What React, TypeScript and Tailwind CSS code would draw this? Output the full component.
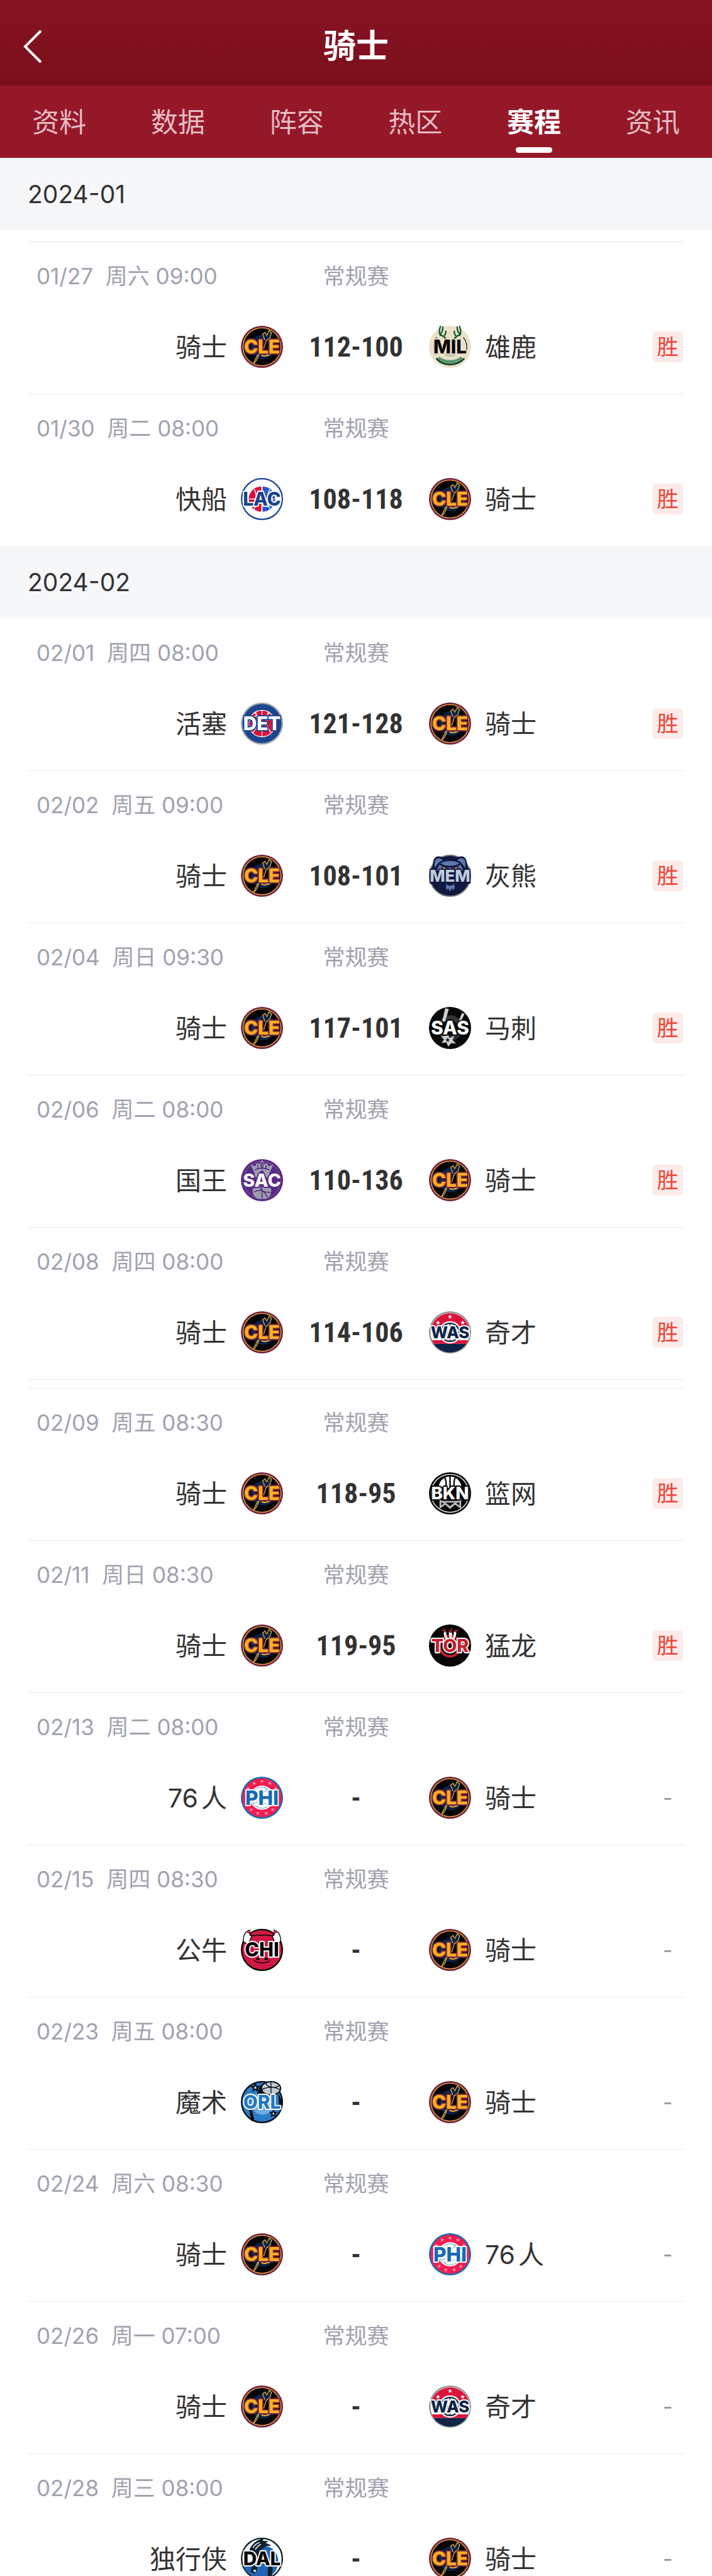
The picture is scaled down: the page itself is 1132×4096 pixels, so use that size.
import { Fragment, type ReactNode } from 'react'

type TeamCode =
  | 'CLE' | 'MIL' | 'LAC' | 'DET' | 'MEM' | 'SAS' | 'SAC'
  | 'WAS' | 'BKN' | 'TOR' | 'PHI' | 'CHI' | 'ORL' | 'DAL'

interface Game {
  date: string
  time: string
  home: TeamCode
  away: TeamCode
  score?: string
}

interface Month {
  label: string
  pages: Game[][]
  leadingGap?: boolean
}

const TEAM_NAMES: Record<TeamCode, string> = {
  CLE: '骑士',
  MIL: '雄鹿',
  LAC: '快船',
  DET: '活塞',
  MEM: '灰熊',
  SAS: '马刺',
  SAC: '国王',
  WAS: '奇才',
  BKN: '篮网',
  TOR: '猛龙',
  PHI: '76人',
  CHI: '公牛',
  ORL: '魔术',
  DAL: '独行侠',
}

const TABS = ['资料', '数据', '阵容', '热区', '赛程', '资讯']

const MONTHS: Month[] = [
  {
    label: '2024-01',
    leadingGap: true,
    pages: [
      [
        { date: '01/27', time: '周六 09:00', home: 'CLE', away: 'MIL', score: '112-100' },
        { date: '01/30', time: '周二 08:00', home: 'LAC', away: 'CLE', score: '108-118' },
      ],
    ],
  },
  {
    label: '2024-02',
    pages: [
      [
        { date: '02/01', time: '周四 08:00', home: 'DET', away: 'CLE', score: '121-128' },
        { date: '02/02', time: '周五 09:00', home: 'CLE', away: 'MEM', score: '108-101' },
        { date: '02/04', time: '周日 09:30', home: 'CLE', away: 'SAS', score: '117-101' },
        { date: '02/06', time: '周二 08:00', home: 'SAC', away: 'CLE', score: '110-136' },
        { date: '02/08', time: '周四 08:00', home: 'CLE', away: 'WAS', score: '114-106' },
      ],
      [
        { date: '02/09', time: '周五 08:30', home: 'CLE', away: 'BKN', score: '118-95' },
        { date: '02/11', time: '周日 08:30', home: 'CLE', away: 'TOR', score: '119-95' },
        { date: '02/13', time: '周二 08:00', home: 'PHI', away: 'CLE' },
        { date: '02/15', time: '周四 08:30', home: 'CHI', away: 'CLE' },
        { date: '02/23', time: '周五 08:00', home: 'ORL', away: 'CLE' },
        { date: '02/24', time: '周六 08:30', home: 'CLE', away: 'PHI' },
        { date: '02/26', time: '周一 07:00', home: 'CLE', away: 'WAS' },
        { date: '02/28', time: '周三 08:00', home: 'DAL', away: 'CLE' },
      ],
    ],
  },
]

function Star({ x, y, s = 3, fill, stroke }: { x: number; y: number; s?: number; fill: string; stroke?: string }) {
  return (
    <path
      transform={`translate(${x} ${y}) scale(${s})`}
      d="M0-1 .26-.31 .95-.31 .4.12 .59.81 0 .42-.59.81-.4.12-.95-.31-.26-.31Z"
      fill={fill}
      stroke={stroke}
      strokeWidth={stroke ? 0.35 : 0}
    />
  )
}

interface CodeTextProps {
  code: TeamCode
  fill: string
  stroke: string
  size?: number
  y?: number
  width?: number
}

function CodeText({ code, fill, stroke, size = 31, y = 46, width = 4 }: CodeTextProps) {
  return (
    <text
      x="35"
      y={y}
      textAnchor="middle"
      className="font-['Inter',sans-serif] font-extrabold"
      fontSize={size}
      fill={fill}
      stroke={stroke}
      strokeWidth={width}
      strokeLinejoin="round"
      paintOrder="stroke"
    >
      {code}
    </text>
  )
}

const LOGOS: Record<TeamCode, ReactNode> = {
  CLE: (
    <>
      <circle cx="35" cy="35" r="35" fill="#6f2440" />
      <circle cx="35" cy="35" r="31.5" fill="#050505" stroke="#f5a93c" strokeWidth="1.4" />
      <circle cx="37" cy="35" r="16" fill="none" stroke="#0a2348" strokeWidth="9" />
      <path d="M40 24 36 14l4-3 3 5 4-8 4 4-3 8-6 5-4 13" fill="#0a2348" stroke="#e9b13a" strokeWidth="1.3" />
      <path d="M30 46c-3 3-5 7-9 17 6-5 7-9 9-16Z" fill="#0a2348" stroke="#e9b13a" strokeWidth="1.3" />
      <path d="M34 49c5 2 11 1 15-2" fill="none" stroke="#f5a93c" strokeWidth="2" />
      <CodeText code="CLE" fill="#fdb01e" stroke="#7b2a43" />
    </>
  ),
  MIL: (
    <>
      <circle cx="35" cy="35" r="35" fill="#ece0ca" />
      <path d="M13 19A27 27 0 0 0 12 48M57 19A27 27 0 0 1 62 43" fill="none" stroke="#0d4a25" strokeWidth="1.5" />
      <path d="M29 25c1-7-9-6-11-14M19 16c-3-4-2-9 0-15M21 11c2-3 2-5 2-9M24 18c3-2 4-5 4-9M41 25c-1-7 9-6 11-14M51 16c3-4 2-9 0-15M49 11c-2-3-2-5-2-9M46 18c-3-2-4-5-4-9" fill="none" stroke="#0d5a2c" strokeWidth="2.4" strokeLinecap="round" />
      <path d="M35 23v26M29 25v22M41 25v22" stroke="#0d4a25" strokeWidth="1" />
      <path d="M24 47c4 6 18 6 22 0Z" fill="#b9c4a8" />
      <path d="M17 51c8 8 28 8 36 0l4 4c-9 11-35 11-44 0Z" fill="#5c9671" />
      <path d="M12 54c11 14 35 14 47 0" fill="none" stroke="#0d3d1f" strokeWidth="2.4" />
      <CodeText code="MIL" fill="#080808" stroke="#ece0ca" width={3} />
    </>
  ),
  LAC: (
    <>
      <circle cx="35" cy="35" r="33.8" fill="#fff" stroke="#1c4a94" strokeWidth="2.4" />
      <path d="M34 14a21 21 0 0 0 0 42Z" fill="#d91236" />
      <path d="M36 14a21 21 0 0 1 0 42Z" fill="#2458c4" />
      <path d="M14 35h42M22 19c5 8 5 24 0 32M48 19c-5 8-5 24 0 32" fill="none" stroke="#fff" strokeWidth="1.5" />
      <CodeText code="LAC" fill="#17428c" stroke="#fff" />
    </>
  ),
  DET: (
    <>
      <circle cx="35" cy="35" r="35" fill="#a4a7aa" />
      <circle cx="35" cy="35" r="32.5" fill="#1b4590" />
      <circle cx="35" cy="35" r="22" fill="#dc1238" stroke="#fff" strokeWidth="1.4" />
      <path d="M35 13v44M15 26c13-6 27-6 40 0M22 16c7 10 19 10 26 0M20 50c8-9 8-20 5-34M50 50c-8-9-8-20-5-34" fill="none" stroke="#fff" strokeWidth="1.3" />
      <CodeText code="DET" fill="#fff" stroke="#1b4590" />
    </>
  ),
  MEM: (
    <>
      <circle cx="35" cy="35" r="34" fill="#12183f" stroke="#75787c" strokeWidth="2" />
      <path d="M6 27C6 10 8 3 16 3c5 0 8 2 9 5h20c2-3 4-5 9-5 8 0 10 8 10 24l5 8v13H1V35Z" fill="#12183f" />
      <path d="M10 22C8 10 11 6 16 6c4 0 6 2 7 4-6 1-9 6-13 12ZM60 22c2-12-1-16-6-16-4 0-6 2-7 4 6 1 9 6 13 12Z" fill="#5d78ac" />
      <path d="M18 15c10-6 24-6 34 0l4 9H14ZM12 25l12-3-6 6ZM58 25l-12-3 6 6Z" fill="#5d78ac" />
      <path d="M17 15c7 4 10 5 18 5s11-1 18-5M21 20l11 4-3 6M49 20l-11 4 3 6" fill="none" stroke="#12183f" strokeWidth="3" />
      <path d="m23 20 6 3h-5ZM47 20l-6 3h5Z" fill="#f6c33c" />
      <path d="M29 48c2 5 10 5 12 0l2 5-2 6-3-3-3 5-3-5-3 3-1-6Z" fill="#5d78ac" />
      <path d="M31 50h8" stroke="#12183f" strokeWidth="2" />
      <CodeText code="MEM" fill="#bdcddd" stroke="#12183f" size={27} y={45} />
    </>
  ),
  SAS: (
    <>
      <circle cx="35" cy="35" r="35" fill="#080808" />
      <circle cx="35" cy="35" r="17" fill="none" stroke="#333538" strokeWidth="8" />
      <path d="m27 2 6 2-6 20h-5ZM55 10l4 2-6 12h-4Z" fill="#ccd0d6" />
      <path d="m31 45 3 7 8-4-3 7 6 6-8-1-5 6-3-7-8 1 4-6-5-5 8-1Z" fill="#ccd0d6" />
      <Star x={31} y={55} s={4} fill="#080808" />
      <CodeText code="SAS" fill="#fff" stroke="#080808" />
    </>
  ),
  SAC: (
    <>
      <circle cx="35" cy="35" r="35" fill="#5a2a86" />
      <circle cx="35" cy="35" r="31" fill="none" stroke="#7d5f9f" strokeWidth="1" />
      <path d="m16 9 8 3 2-5 6 1 3-8 3 8 6-1 2 5 8-3-7 15v6H23v-6Z" fill="#9aa0ab" />
      <path d="M23 18c8-4 16-4 24 0M28 10v6M42 10v6M35 6l-2 5 2 4 2-4Z" fill="none" stroke="#5a2a86" strokeWidth="1.6" />
      <circle cx="35" cy="22" r="3" fill="#5a2a86" />
      <path d="M20 49c8-4 22-4 30 0 2 8-2 14-8 17H28c-6-3-10-9-8-17Z" fill="#9aa0ab" />
      <path d="M35 46v19M22 55c9-6 18-3 22 9M32 47c1 6 8 9 18 8" fill="none" stroke="#5a2a86" strokeWidth="1.6" />
      <CodeText code="SAC" fill="#fff" stroke="#5a2a86" size={30} />
    </>
  ),
  WAS: (
    <>
      <circle cx="35" cy="35" r="35" fill="#8f9396" />
      <circle cx="35" cy="35" r="32.5" fill="#fff" />
      <path d="M3 30a32.5 32.5 0 0 1 64 0Z" fill="#dc1238" />
      <path d="M5 48h60l-3 6H8Z" fill="#dc1238" />
      <path d="M8 54h54a32.5 32.5 0 0 1-54 0Z" fill="#0d2347" />
      <circle cx="35" cy="35" r="19" fill="#fff" stroke="#dc1238" strokeWidth="1" />
      <circle cx="35" cy="35" r="15" fill="#fff" stroke="#0d2347" strokeWidth="2.4" />
      <path d="M22 35h26M35 21v28M25 24c6 7 6 15 0 22M45 24c-6 7-6 15 0 22" fill="none" stroke="#0d2347" strokeWidth="1.8" />
      <Star x={15} y={19} s={4} fill="#fff" />
      <Star x={35} y={9} s={4} fill="#fff" />
      <Star x={56} y={19} s={4} fill="#fff" />
      <CodeText code="WAS" fill="#0d2347" stroke="#fff" size={27} y={45} />
    </>
  ),
  BKN: (
    <>
      <circle cx="35" cy="35" r="35" fill="#050505" />
      <circle cx="35" cy="35" r="31.5" fill="none" stroke="#fff" strokeWidth="1.4" />
      <path d="M16 26a19 19 0 0 1 38 0Z" fill="#fff" />
      <path d="M35 6v20M26 8c3 6 3 12 2 18M44 8c-3 6-3 12-2 18" fill="none" stroke="#050505" strokeWidth="2.4" />
      <path d="M19 45v13l8-6 8 7 8-7 9 6V45M22 48l13 10 13-10M19 49h33" fill="none" stroke="#b4b6b8" strokeWidth="3" />
      <CodeText code="BKN" fill="#fff" stroke="#050505" size={29} y={45} />
    </>
  ),
  TOR: (
    <>
      <circle cx="35" cy="35" r="35" fill="#050505" />
      <circle cx="35" cy="36" r="17" fill="none" stroke="#c8202f" strokeWidth="4" />
      <path d="M25 12c-1 6 1 10 5 14l2-2c-3-4-4-8-3-12ZM33 13c0 6 1 9 3 14 2-5 3-8 2-14ZM45 12c1 6-1 10-5 14l-2-2c3-4 4-8 3-12Z" fill="#fff" />
      <path d="m22 8 5 4-1-5M33 9l3 4 2-7M43 9l1 3 5-3" fill="none" stroke="#b81c2c" strokeWidth="2" />
      <CodeText code="TOR" fill="#c8202f" stroke="#fff" size={30} />
    </>
  ),
  PHI: (
    <>
      <circle cx="35" cy="35" r="35" fill="#176db5" />
      <circle cx="35" cy="35" r="32.5" fill="#f01e50" />
      <circle cx="35" cy="35" r="20" fill="#fff" />
      <circle cx="35" cy="35" r="17.5" fill="none" stroke="#5a9ccc" strokeWidth="1" />
      <path d="M23 23c8 6 17 3 22-2M21 45c8-6 19-1 26 3M26 50c5-6 5-10 3-15M41 18c4 8 7 12 11 15" fill="none" stroke="#5a9ccc" strokeWidth="1" />
      {[[22, 11], [35, 8], [48, 11], [12, 20], [58, 20], [17, 55], [28, 61], [42, 61], [53, 55]].map(([x, y]) => (
        <Star key={`${x}-${y}`} x={x} y={y} s={3.6} fill="#f990ab" />
      ))}
      <CodeText code="PHI" fill="#176ab2" stroke="#fff" size={33} y={47} />
    </>
  ),
  CHI: (
    <>
      <circle cx="35" cy="35" r="33.8" fill="#d01a44" stroke="#050505" strokeWidth="2.4" />
      <path d="M15 2C7 4 4 10 4 20c2 4 5 5 9 4l5-12c-4-1-5-5-3-10ZM55 2c8 2 11 8 11 18-2 4-5 5-9 4l-5-12c4-1 5-5 3-10Z" fill="#fff" stroke="#050505" strokeWidth="1.4" />
      <path d="M15 2 9 6l6 2ZM55 2l6 4-6 2Z" fill="#d01a44" />
      <path d="M15 10c6 4 10-2 20 1 10-3 14 3 20-1" fill="none" stroke="#050505" strokeWidth="1.6" />
      <path d="M22 52c3 6 23 6 26 0" fill="none" stroke="#050505" strokeWidth="1.6" />
      <ellipse cx="28" cy="50" rx="3" ry="2" fill="#050505" />
      <ellipse cx="42" cy="50" rx="3" ry="2" fill="#050505" />
      <CodeText code="CHI" fill="#050505" stroke="#fff" size={32} />
    </>
  ),
  ORL: (
    <>
      <circle cx="35" cy="35" r="33.8" fill="#2a7cc4" stroke="#050a14" strokeWidth="2.4" />
      <circle cx="36" cy="37" r="19" fill="#6caadf" />
      <path d="M36 4c-6 6-8 12-9 20h12l-4-9ZM13 46c2 8 3 13 5 21l4-3-4-18ZM62 20l7 15-5 8Z" fill="#050a14" />
      <ellipse cx="50" cy="12" rx="16" ry="11" fill="#c4c9d1" stroke="#050a14" strokeWidth="2" />
      <path d="M50 1v22M35 14c10-5 22-5 31 1M42 3c-2 5 12 12 22 4" fill="none" stroke="#050a14" strokeWidth="1.4" />
      <Star x={24} y={11} s={6} fill="#fff" stroke="#050a14" />
      <Star x={54} y={54} s={5} fill="#fff" stroke="#050a14" />
      <CodeText code="ORL" fill="#2078c4" stroke="#fff" />
    </>
  ),
  DAL: (
    <>
      <circle cx="35" cy="35" r="33.8" fill="#fff" stroke="#0b1f2c" strokeWidth="2.4" />
      <path d="M35 14c14-2 27 9 27 25S52 67 35 67C20 67 6 58 5 46l14-8 7-16Z" fill="#1f65b4" />
      <path d="M14 20c5-11 14-17 24-19l-2 4 10 1-5 3 11 4-10 1-11 8-5 18 1 14-5 6-6-4 4-12-2-8ZM51 47c4 6-1 12 1 21l-6 1c-2-7-2-14 0-22Z" fill="#0b1f2c" />
      <path d="M20 17c3-5 7-8 11-9M24 20c2-4 5-7 9-9M48 8l8 5-7-1" fill="none" stroke="#fff" strokeWidth="1.6" />
      <circle cx="23" cy="55" r="2" fill="#fff" />
      <CodeText code="DAL" fill="#050505" stroke="#fff" />
    </>
  ),
}

function TeamLogo({ code }: { code: TeamCode }) {
  return (
    <svg viewBox="0 0 70 70" className="size-[67px] shrink-0" role="img" aria-label={code}>
      {LOGOS[code]}
    </svg>
  )
}

function GameRow({ game, divider }: { game: Game; divider: boolean }) {
  return (
    <li className={`mx-11 h-[242px] border-t pt-[30px] ${divider ? 'border-[#ececee]' : 'border-transparent'}`}>
      <div className="grid grid-cols-[1fr_232px_1fr] text-[35px] leading-[48px] text-[#a0a2ae]">
        <time className="whitespace-pre pl-[14px]">{`${game.date}  ${game.time}`}</time>
        <span className="text-center">常规赛</span>
      </div>
      <div className="mt-[55px] grid grid-cols-[1fr_232px_1fr] items-center text-[41px] leading-[48px] text-[#333]">
        <div className="flex items-center justify-end gap-[22px] [text-autospace:normal]">
          <span>{TEAM_NAMES[game.home]}</span>
          <TeamLogo code={game.home} />
        </div>
        <strong className="text-center font-['Roboto_Condensed','Roboto',sans-serif] text-[44px] font-bold">
          {game.score ?? '-'}
        </strong>
        <div className="flex items-center [text-autospace:normal]">
          <TeamLogo code={game.away} />
          <span className="ml-[22px]">{TEAM_NAMES[game.away]}</span>
          {game.score ? (
            <span className="ml-auto mr-0.5 w-[49px] rounded-md bg-[#fdebea] text-center text-[34px] leading-[49px] text-[#ee4437]">
              胜
            </span>
          ) : (
            <span className="ml-auto mr-0.5 w-[49px] text-center text-[34px] leading-[49px] text-[#999]">-</span>
          )}
        </div>
      </div>
    </li>
  )
}

export default function App() {
  return (
    <div className="flex h-screen flex-col overflow-hidden bg-white font-['Inter','Noto_Sans_CJK_SC',sans-serif]">
      <header className="shrink-0 text-white">
        <div className="grid h-[136px] grid-cols-[1fr_auto_1fr] items-center bg-linear-to-b from-[#871323] to-[#7d0f1c] pt-3">
          <button type="button" aria-label="返回" className="ml-9 w-8">
            <svg viewBox="0 0 32 56" className="h-14 w-8" fill="none" stroke="currentColor" strokeWidth="4">
              <path d="M29 3 4 28l25 25" />
            </svg>
          </button>
          <h1 className="text-[52px] font-bold leading-[72px]">骑士</h1>
        </div>
        <nav className="grid h-[115px] grid-cols-6 bg-[#951829] text-[43px] leading-[60px]">
          {TABS.map((tab) => {
            const active = tab === '赛程'
            return (
              <a
                key={tab}
                href="#"
                aria-current={active ? 'page' : undefined}
                className={`flex flex-col items-center pt-7 ${active ? 'font-bold text-white' : 'text-[#e6bcc2]'}`}
              >
                {tab}
                {active && <span className="mt-[10px] h-[9px] w-[58px] rounded-full bg-white" />}
              </a>
            )
          })}
        </nav>
      </header>

      <main className="min-h-0 flex-1 overflow-hidden">
        {MONTHS.map((month) => (
          <section key={month.label}>
            <h2 className={`bg-[#f6f7f9] px-11 text-[39px] leading-[115px] text-[#333] ${month.leadingGap ? 'mb-[18px]' : ''}`}>
              {month.label}
            </h2>
            {month.pages.map((page, p) => (
              <Fragment key={page[0].date}>
                {p > 0 && <div className="mx-11 h-[14px] border-t border-[#ececee]" />}
                <ul>
                  {page.map((game, i) => (
                    <GameRow key={game.date} game={game} divider={i > 0 || p > 0 || !!month.leadingGap} />
                  ))}
                </ul>
              </Fragment>
            ))}
          </section>
        ))}
      </main>
    </div>
  )
}
